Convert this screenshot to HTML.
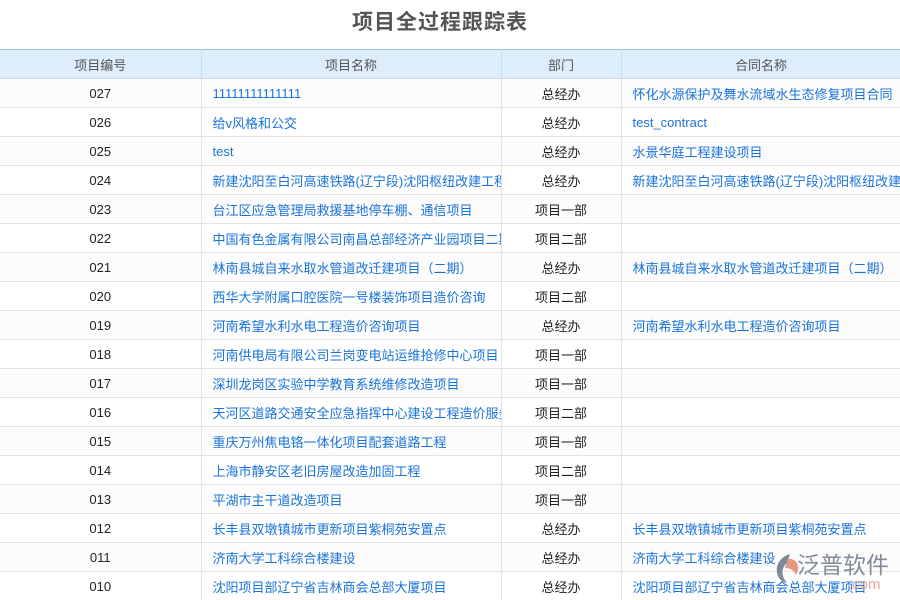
<!DOCTYPE html>
<html><head><meta charset="utf-8">
<style>
html,body{margin:0;padding:0;background:#fff;width:900px;height:600px;overflow:hidden}
body{font-family:"Liberation Sans","Noto Sans CJK SC",sans-serif;position:relative}
h1{position:absolute;top:8px;left:0;width:880px;text-align:center;margin:0;font-size:21px;font-weight:bold;color:#555;line-height:30px;letter-spacing:1px}
table{position:absolute;top:49px;left:0;border-collapse:collapse;table-layout:fixed;width:901px}
th{background:#deedfb;color:#555;font-weight:normal;font-size:13px;height:28px;border-top:1px solid #93bfe6;border-bottom:1px solid #c8dbef;border-right:1px solid #c8dbef;padding:0}
td{height:28px;border-bottom:1px solid #e3e3e3;border-right:1px solid #e3e3e3;font-size:13px;color:#222;padding:0;white-space:nowrap;overflow:hidden}
td.c{text-align:center}
td.l{color:#1a73d9;padding-left:11px}
tr:nth-child(even) td{background:#fcfcfc}
.wm{position:absolute;left:797px;top:551px;font-size:23px;line-height:28px;color:#6e7888;opacity:.85;letter-spacing:0}
.wm2{position:absolute;left:848px;top:577px;font-size:15px;line-height:16px;color:#e79a80;opacity:.85}
</style></head><body>
<h1>项目全过程跟踪表</h1>
<table>
<colgroup><col style="width:201px"><col style="width:300px"><col style="width:120px"><col style="width:280px"></colgroup>
<tr><th>项目编号</th><th>项目名称</th><th>部门</th><th>合同名称</th></tr>
<tr><td class="c">027</td><td class="l">11111111111111</td><td class="c">总经办</td><td class="l">怀化水源保护及舞水流域水生态修复项目合同</td></tr>
<tr><td class="c">026</td><td class="l">给v风格和公交</td><td class="c">总经办</td><td class="l">test_contract</td></tr>
<tr><td class="c">025</td><td class="l">test</td><td class="c">总经办</td><td class="l">水景华庭工程建设项目</td></tr>
<tr><td class="c">024</td><td class="l">新建沈阳至白河高速铁路(辽宁段)沈阳枢纽改建工程</td><td class="c">总经办</td><td class="l">新建沈阳至白河高速铁路(辽宁段)沈阳枢纽改建工程</td></tr>
<tr><td class="c">023</td><td class="l">台江区应急管理局救援基地停车棚、通信项目</td><td class="c">项目一部</td><td class="l"></td></tr>
<tr><td class="c">022</td><td class="l">中国有色金属有限公司南昌总部经济产业园项目二期</td><td class="c">项目二部</td><td class="l"></td></tr>
<tr><td class="c">021</td><td class="l">林南县城自来水取水管道改迁建项目（二期）</td><td class="c">总经办</td><td class="l">林南县城自来水取水管道改迁建项目（二期）</td></tr>
<tr><td class="c">020</td><td class="l">西华大学附属口腔医院一号楼装饰项目造价咨询</td><td class="c">项目二部</td><td class="l"></td></tr>
<tr><td class="c">019</td><td class="l">河南希望水利水电工程造价咨询项目</td><td class="c">总经办</td><td class="l">河南希望水利水电工程造价咨询项目</td></tr>
<tr><td class="c">018</td><td class="l">河南供电局有限公司兰岗变电站运维抢修中心项目</td><td class="c">项目一部</td><td class="l"></td></tr>
<tr><td class="c">017</td><td class="l">深圳龙岗区实验中学教育系统维修改造项目</td><td class="c">项目一部</td><td class="l"></td></tr>
<tr><td class="c">016</td><td class="l">天河区道路交通安全应急指挥中心建设工程造价服务</td><td class="c">项目二部</td><td class="l"></td></tr>
<tr><td class="c">015</td><td class="l">重庆万州焦电铬一体化项目配套道路工程</td><td class="c">项目一部</td><td class="l"></td></tr>
<tr><td class="c">014</td><td class="l">上海市静安区老旧房屋改造加固工程</td><td class="c">项目二部</td><td class="l"></td></tr>
<tr><td class="c">013</td><td class="l">平湖市主干道改造项目</td><td class="c">项目一部</td><td class="l"></td></tr>
<tr><td class="c">012</td><td class="l">长丰县双墩镇城市更新项目紫桐苑安置点</td><td class="c">总经办</td><td class="l">长丰县双墩镇城市更新项目紫桐苑安置点</td></tr>
<tr><td class="c">011</td><td class="l">济南大学工科综合楼建设</td><td class="c">总经办</td><td class="l">济南大学工科综合楼建设</td></tr>
<tr><td class="c">010</td><td class="l">沈阳项目部辽宁省吉林商会总部大厦项目</td><td class="c">总经办</td><td class="l">沈阳项目部辽宁省吉林商会总部大厦项目</td></tr>
</table>
<svg style="position:absolute;left:773px;top:553px;opacity:.85" width="28" height="31" viewBox="0 0 28 31"><path d="M17 1 C7 4 1 13 5 23 C7 28 12 30 14 30 C8 23 8 15 14 10 Z" fill="#6a7785"/><path d="M15 6 C24 5 28 14 23 22 C21 17 17 15 12 15 Z" fill="#e0896a"/></svg>
<div class="wm">泛普软件</div>
<div class="wm2">.com</div>
</body></html>
